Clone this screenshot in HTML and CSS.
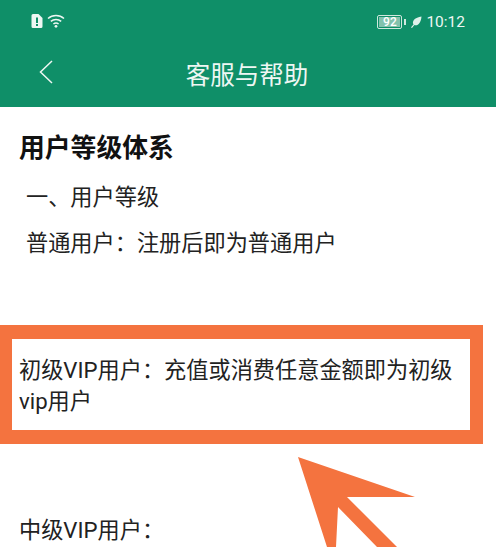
FILE: index.html
```html
<!DOCTYPE html>
<html lang="zh-CN">
<head>
<meta charset="utf-8">
<title>客服与帮助</title>
<link rel="stylesheet" href="styles.css">
</head>
<body>
<header class="appbar">
  <div class="status">
    <div class="status-left">
      <svg class="sim" viewBox="0 0 11 14"><path d="M1.5 0H7L11 4V12.5A1.5 1.5 0 0 1 9.500 14H1.500A1.500 1.500 0 0 1 0 12.500V1.500A1.500 1.500 0 0 1 1.500 0Z" fill="#eef7f3"/><rect x="4.500" y="3.500" width="2" height="5.500" fill="#0f8f68"/><rect x="4.500" y="10" width="2" height="2" fill="#0f8f68"/></svg>
      <svg class="wifi" viewBox="0 0 18 14"><g fill="none" stroke="#eef7f3" stroke-width="1.500"><path d="M1 4.500C5.500 .5 12.500 .5 17 4.500"/><path d="M3.800 7.300C6.800 4.800 11.200 4.800 14.200 7.300"/><path d="M6.400 10C8 8.800 10 8.800 11.600 10"/></g><circle cx="9" cy="12.300" r="1.400" fill="#eef7f3"/></svg>
    </div>
    <div class="status-right">
      <span class="battery"><span class="battery-level">92</span></span>
      <span class="battery-cap"></span>
      <svg class="leaf" viewBox="0 0 12 12"><path d="M1 11.500C2 10 2.500 9.500 3.500 8.500C1.500 5 5 1.500 11.500 .5C11 7 7.500 10.500 4.500 9C3.500 10 2.800 10.800 2 12Z" fill="#dff1ea"/></svg>
      <span class="clock">10:12</span>
    </div>
  </div>
  <div class="nav">
    <svg class="back" viewBox="0 0 14 24"><path d="M13 1L1.500 12L13 23" fill="none" stroke="#eef7f3" stroke-width="1.500"/></svg>
    <h1 class="title">客服与帮助</h1>
  </div>
</header>
<main class="content">
  <h2 class="heading">用户等级体系</h2>
  <p class="line indent first">一、用户等级</p>
  <p class="line indent second">普通用户：注册后即为普通用户</p>
  <div class="highlight">
    <p class="para">初级VIP用户：充值或消费任意金额即为初级vip用户</p>
  </div>
  <p class="line next">中级VIP用户：</p>
</main>
<svg class="arrow" viewBox="0 0 496 547"><polygon points="298,457 415,497 347,497 397,547 377,547 338,507 336,547 327,547" fill="#f4733f"/></svg>
</body>
</html>
```
FILE: styles.css
```css
* { box-sizing: border-box; }
html, body { margin: 0; height: 547px; overflow: hidden; }
body {
  position: relative;
  background: #fff;
  color: #222;
  font-family: "Roboto", "Noto Sans CJK SC", sans-serif;
}
.appbar { height: 107px; background: #0f8f68; color: #eef7f3; }
.status {
  height: 40px;
  padding: 12px 31px 0 31px;
  display: flex;
  justify-content: space-between;
}
.status-left { display: flex; gap: 4px; height: 18px; align-items: center; }
.sim { width: 12px; height: 14px; }
.wifi { width: 18px; height: 14px; }
.status-right { display: flex; align-items: center; height: 20px; }
.battery {
  width: 25px; height: 14px;
  border: 1px solid #cfe8de;
  border-radius: 2px;
  padding: 1px;
  display: flex;
}
.battery-level {
  flex: 1;
  background: #82c2ad;
  color: #fff;
  font-size: 12px;
  font-weight: 500;
  line-height: 10px;
  text-align: center;
}
.battery-cap { width: 2px; height: 6px; background: #cfe8de; margin: 0 4px 0 2px; }
.leaf { width: 12px; height: 12px; margin-right: 4px; }
.clock { font-size: 15.500px; }
.nav { position: relative; height: 67px; display: flex; justify-content: center; padding-top: 18px; }
.back { position: absolute; left: 39px; top: 20px; width: 14px; height: 24px; }
.title { margin: 0; font-size: 24.500px; font-weight: 400; line-height: 36px; position: relative; left: -1px; }
.content { padding: 0 19px; }
.heading { margin: 24px 0 0; font-size: 25.800px; line-height: 34px; font-weight: 700; color: #111; }
.line { margin: 0; font-size: 22.200px; line-height: 30px; }
.indent { padding-left: 7px; }
.first { margin-top: 17px; }
.second { margin-top: 16px; }
.highlight {
  margin: 67px 13px 0 -19px;
  width: 483px;
  height: 119px;
  border: 14px solid #f4733f;
  border-left-width: 12px;
  border-right-width: 13px;
  background: #fff;
  padding: 16px 6px 0 7px;
}
.para { margin: 0; font-size: 22.200px; line-height: 31px; }
.next { margin-top: 71px; }
.arrow { position: absolute; left: 0; top: 0; width: 496px; height: 547px; }
```
